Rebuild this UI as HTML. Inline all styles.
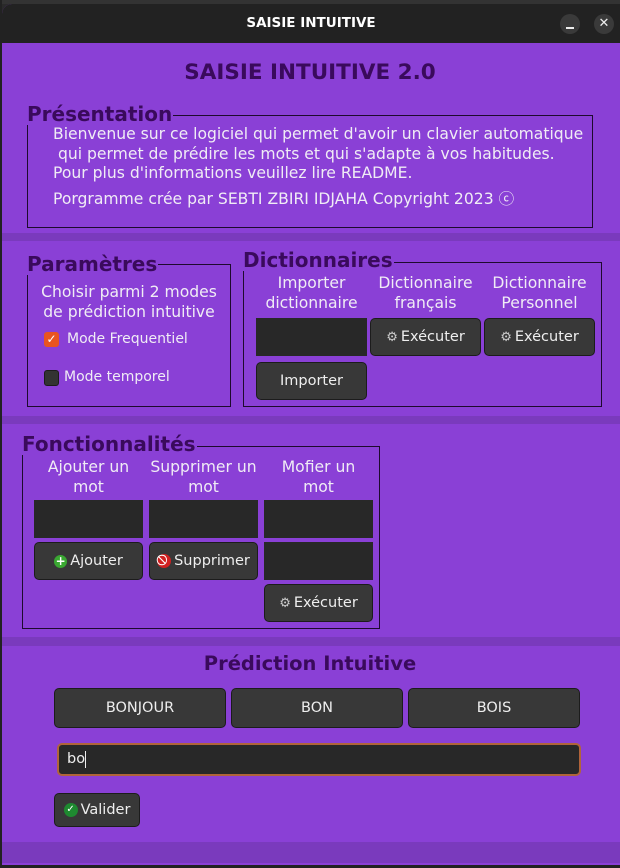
<!DOCTYPE html>
<html><head><meta charset="utf-8"><style>
*{margin:0;padding:0;box-sizing:border-box}
body{width:620px;height:868px;background:#2a2a2a;position:relative;overflow:hidden;font-family:"DejaVu Sans","Liberation Sans",sans-serif;}
.a{position:absolute}
.win{left:2px;top:4px;width:620px;height:862px;background:#8a40d6;border-top-left-radius:10px;overflow:hidden}
.title{left:0;top:0;width:620px;height:39px;background:#222}
.band{left:0;width:620px;background:#7a3abd}
.box{position:absolute;border:1px solid #1e0a2e}
.lg{position:absolute;font-weight:bold;color:#3a0a5c;background:#8a40d6;font-size:20px;line-height:22px;padding-right:1px}
.t{position:absolute;color:#f0ecf5;font-size:15.6px;white-space:nowrap}
.c{text-align:center;line-height:19.5px;font-size:15.6px;color:#f0ecf5;position:absolute;white-space:nowrap}
.btn{position:absolute;background:#383838;border:1px solid #1c1c1c;border-radius:5px;color:#eee;font-size:14.5px;display:flex;align-items:center;justify-content:center;gap:3px}
.ent{position:absolute;background:#282828}
</style></head><body>
<div class="a" style="left:0;top:0;width:620px;height:4px;background:#333"></div>
<div class="a win">
 <div class="a title"></div>
 <div class="a" style="left:0;top:11px;width:618px;text-align:center;color:#fff;font-weight:bold;font-size:13.5px">SAISIE INTUITIVE</div>
 <div class="a" style="left:558px;top:10px;width:20px;height:20px;border-radius:50%;background:#3a3a3a"></div>
 <div class="a" style="left:564px;top:23px;width:8px;height:2px;background:#eee"></div>
 <div class="a" style="left:592px;top:10px;width:20px;height:20px;border-radius:50%;background:#3a3a3a;color:#eee;font-size:13px;text-align:center;line-height:20px">✕</div>
</div>
<div class="a" style="left:0;top:60px;width:620px;text-align:center;font-weight:bold;font-size:21.5px;color:#3a0a5c">SAISIE INTUITIVE 2.0</div>

<div class="box" style="left:27px;top:115px;width:566px;height:113px"></div>
<div class="lg" style="left:27px;top:103px">Présentation</div>
<div class="t" style="left:53px;top:125px">Bienvenue sur ce logiciel qui permet d'avoir un clavier automatique</div>
<div class="t" style="left:53px;top:145px">&nbsp;qui permet de prédire les mots et qui s'adapte à vos habitudes.</div>
<div class="t" style="left:53px;top:164px">Pour plus d'informations veuillez lire README.</div>
<div class="t" style="left:53px;top:187px">Porgramme crée par SEBTI ZBIRI IDJAHA Copyright 2023 ⓒ</div>

<div class="a band" style="top:233px;height:8px"></div>

<div class="box" style="left:27px;top:264px;width:204px;height:143px"></div>
<div class="lg" style="left:27px;top:253px">Paramètres</div>
<div class="c" style="left:27px;width:204px;top:283px">Choisir parmi 2 modes<br>de prédiction intuitive</div>
<div class="a" style="left:44px;top:332px;width:15px;height:15px;background:#e95420;border-radius:3px;color:#fff;font-size:12px;text-align:center;line-height:15px">✓</div>
<div class="t" style="left:67px;top:331px;font-size:14px">Mode Frequentiel</div>
<div class="a" style="left:44px;top:370px;width:15px;height:16px;background:#333;border:1px solid #1c1c1c;border-radius:3px"></div>
<div class="t" style="left:64px;top:369px;font-size:14px">Mode temporel</div>

<div class="box" style="left:243px;top:262px;width:359px;height:145px"></div>
<div class="lg" style="left:243px;top:249px">Dictionnaires</div>
<div class="c" style="left:256px;width:111px;top:274px">Importer<br>dictionnaire</div>
<div class="c" style="left:370px;width:111px;top:274px">Dictionnaire<br>français</div>
<div class="c" style="left:484px;width:111px;top:274px">Dictionnaire<br>Personnel</div>
<div class="ent" style="left:256px;top:318px;width:111px;height:38px"></div>
<div class="btn" style="left:370px;top:318px;width:111px;height:38px"><span style="font-size:13px;color:#ccc">⚙</span>Exécuter</div>
<div class="btn" style="left:484px;top:318px;width:111px;height:38px"><span style="font-size:13px;color:#ccc">⚙</span>Exécuter</div>
<div class="btn" style="left:256px;top:362px;width:111px;height:38px">Importer</div>

<div class="a band" style="top:416px;height:8px"></div>

<div class="box" style="left:22px;top:446px;width:358px;height:183px"></div>
<div class="lg" style="left:22px;top:433px">Fonctionnalités</div>
<div class="c" style="left:34px;width:109px;top:458px">Ajouter un<br>mot</div>
<div class="c" style="left:149px;width:109px;top:458px">Supprimer un<br>mot</div>
<div class="c" style="left:264px;width:109px;top:458px">Mofier un<br>mot</div>
<div class="ent" style="left:34px;top:500px;width:109px;height:38px"></div>
<div class="ent" style="left:149px;top:500px;width:109px;height:38px"></div>
<div class="ent" style="left:264px;top:500px;width:109px;height:38px"></div>
<div class="btn" style="left:34px;top:542px;width:109px;height:38px"><span style="width:13px;height:13px;border-radius:50%;background:#3aa832;color:#fff;font-size:12px;line-height:13px;text-align:center;font-weight:bold">+</span>Ajouter</div>
<div class="btn" style="left:149px;top:542px;width:109px;height:38px"><span style="width:14px;height:14px;border-radius:50%;background:#d02020;color:#fff;font-size:10px;line-height:14px;text-align:center;font-weight:bold">⃠</span>Supprimer</div>
<div class="ent" style="left:264px;top:542px;width:109px;height:38px"></div>
<div class="btn" style="left:264px;top:584px;width:109px;height:38px"><span style="font-size:13px;color:#ccc">⚙</span>Exécuter</div>

<div class="a band" style="top:637px;height:9px"></div>
<div class="a" style="left:0;top:652px;width:620px;text-align:center;font-weight:bold;font-size:19.5px;color:#3a0a5c">Prédiction Intuitive</div>
<div class="btn" style="left:54px;top:688px;width:172px;height:40px">BONJOUR</div>
<div class="btn" style="left:231px;top:688px;width:172px;height:40px">BON</div>
<div class="btn" style="left:408px;top:688px;width:172px;height:40px">BOIS</div>
<div class="a" style="left:57px;top:743px;width:524px;height:33px;background:#282828;border:2px solid #b0643a;border-radius:5px;color:#eee;font-size:14.5px;line-height:29px;padding-left:8px">bo<span style="display:inline-block;width:1px;height:17px;background:#eee;vertical-align:middle"></span></div>
<div class="btn" style="left:54px;top:793px;width:86px;height:34px"><span style="width:14px;height:14px;border-radius:50%;background:#1e8a30;color:#fff;font-size:10px;line-height:14px;text-align:center">✓</span>Valider</div>

<div class="a band" style="top:842px;height:21px"></div>
<div class="a" style="left:0;top:865px;width:620px;height:3px;background:#222"></div>
<div class="a" style="left:0;top:0;width:2px;height:868px;background:#222"></div>
</body></html>
